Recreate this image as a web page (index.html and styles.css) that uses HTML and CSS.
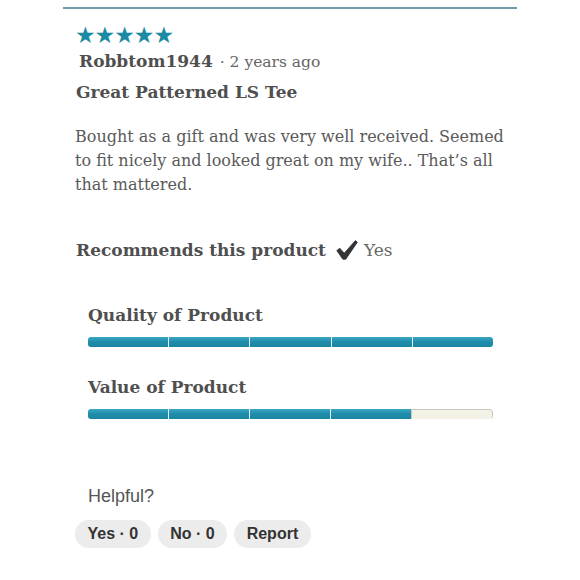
FILE: index.html
```html
<!DOCTYPE html>
<html>
<head>
<meta charset="utf-8">
<link rel="stylesheet" href="styles.css">
</head>
<body>
<div class="review">
  <div class="stars">★★★★★</div>
  <div class="meta"><span class="author">Robbtom1944</span><span class="date">· 2 years ago</span></div>
  <h2 class="title">Great Patterned LS Tee</h2>
  <p class="body">Bought as a gift and was very well received. Seemed to fit nicely and looked great on my wife.. That’s all that mattered.</p>
  <div class="recommend">
    <span class="rec-label">Recommends this product</span>
    <svg class="check" width="22" height="20" viewBox="0 0 22 20"><path d="M0.8 10.6 L3.8 8.2 L8.2 13.2 L19.4 0.6 L21.4 2.2 L9.8 19.2 L6.8 19.2 Z" fill="#333" stroke="#333" stroke-width="0.8" stroke-linejoin="round"/></svg>
    <span class="rec-yes">Yes</span>
  </div>
  <div class="ratings">
    <div class="rating">
      <div class="rating-label">Quality of Product</div>
      <div class="bar">
        <div class="seg on"></div><div class="seg on"></div><div class="seg on"></div><div class="seg on"></div><div class="seg on"></div>
      </div>
    </div>
    <div class="rating">
      <div class="rating-label">Value of Product</div>
      <div class="bar">
        <div class="seg on"></div><div class="seg on"></div><div class="seg on"></div><div class="seg on"></div><div class="seg off"></div>
      </div>
    </div>
  </div>
  <div class="helpful">
    <div class="helpful-label">Helpful?</div>
    <div class="buttons">
      <button class="pill">Yes · 0</button>
      <button class="pill">No · 0</button>
      <button class="pill">Report</button>
    </div>
  </div>
</div>
</body>
</html>
```
FILE: styles.css
```css
html, body {
  margin: 0;
  padding: 0;
  background: #fff;
}
.review {
  width: 454px;
  margin-left: 63px;
  margin-top: 7px;
  border-top: 2px solid #6e9fa9;
  font-family: "DejaVu Serif", serif;
  color: #555;
}
.stars {
  margin: 14px 0 0 12px;
  font-family: "DejaVu Sans", sans-serif;
  font-size: 23px;
  line-height: 24px;
  letter-spacing: -1px;
  color: #1a8ba2;
}
.meta {
  margin: 2px 0 0 16px;
  font-size: 17px;
  line-height: 24px;
}
.author {
  font-weight: bold;
  color: #4f4f4f;
  margin-right: 7px;
}
.date {
  font-size: 15.5px;
  color: #666;
}
.title {
  margin: 6px 0 0 13px;
  font-size: 17px;
  line-height: 24px;
  font-weight: bold;
  color: #4f4f4f;
}
.body {
  margin: 21px 0 0 12px;
  font-size: 16px;
  line-height: 24px;
  color: #5a5a5a;
  width: 440px;
}
.recommend {
  margin: 41px 0 0 13px;
  display: flex;
  align-items: center;
  font-size: 17px;
  line-height: 24px;
}
.rec-label {
  font-weight: bold;
  color: #4f4f4f;
}
.check {
  margin-left: 10px;
  margin-right: 6px;
}
.rec-yes {
  color: #666;
}
.ratings {
  margin: 41px 0 0 25px;
  width: 405px;
}
.rating {
  margin-bottom: 28px;
}
.rating-label {
  font-size: 17px;
  line-height: 24px;
  font-weight: bold;
  color: #4f4f4f;
}
.bar {
  margin-top: 10px;
  height: 10px;
  display: flex;
  border-radius: 3px;
  overflow: hidden;
}
.seg {
  flex: 1;
  height: 100%;
}
.seg + .seg {
  border-left: 1px solid #e8f4f7;
}
.seg.on {
  background: linear-gradient(#3aa6c2, #1f8eab 50%, #1a85a1);
}
.seg.off {
  background: #f4f1e6;
  border: 1px solid #c9c6bd;
  border-radius: 0 3px 3px 0;
}
.helpful {
  margin: 65px 0 0 12px;
}
.helpful-label {
  margin-left: 13px;
  font-family: "Liberation Sans", Arial, sans-serif;
  font-size: 18px;
  line-height: 24px;
  color: #555;
}
.buttons {
  margin-top: 12px;
  display: flex;
  gap: 7px;
}
.pill {
  border: none;
  background: #ececec;
  border-radius: 14px;
  height: 28px;
  padding: 0 12.5px;
  font-family: "Liberation Sans", Arial, sans-serif;
  font-size: 16px;
  font-weight: bold;
  color: #333;
}
```
